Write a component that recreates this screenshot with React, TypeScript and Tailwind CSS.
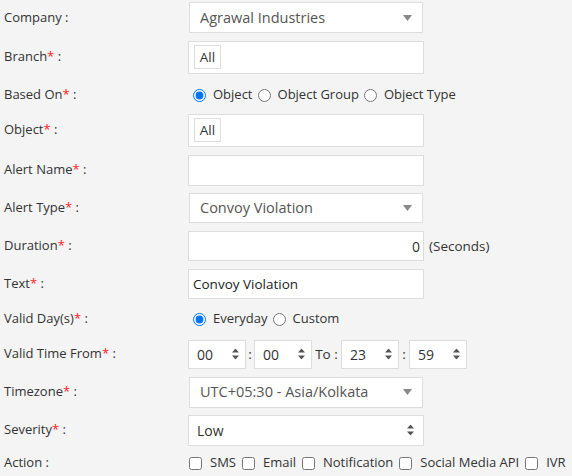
import type { ReactNode } from "react";

function Label({ text, required }: { text: string; required?: boolean }) {
  return (
    <div className="w-[184px] shrink-0 whitespace-nowrap pl-[4px] text-[13px] text-[#333]">
      {text}
      {required ? <span className="text-[#ff2222]">*</span> : null} :
    </div>
  );
}

function Row({ h, label, required, children }: { h: string; label: string; required?: boolean; children: ReactNode }) {
  return (
    <div className={`flex items-center ${h}`}>
      <Label text={label} required={required} />
      {children}
    </div>
  );
}

function Caret() {
  return (
    <svg width="9" height="6" viewBox="0 0 9 6" className="absolute right-[10px] top-1/2 -translate-y-1/2">
      <path d="M0 0h9L4.5 6z" fill="#888" />
    </svg>
  );
}

function UpDown({ className }: { className: string }) {
  return (
    <svg width="7" height="11" viewBox="0 0 7 11" className={className}>
      <path d="M3.5 0L7 4H0z" fill="#555" />
      <path d="M0 7h7L3.5 11z" fill="#555" />
    </svg>
  );
}

function SelectBox({ value, h }: { value: string; h: string }) {
  return (
    <div className={`relative ml-[5px] flex w-[234px] items-center whitespace-nowrap border border-[#ddd] bg-white pl-[10px] text-[14.5px] text-[#555] ${h}`}>
      {value}
      <Caret />
    </div>
  );
}

function TagBox({ h }: { h: string }) {
  return (
    <div className={`ml-[4px] flex w-[236px] items-center border border-[#ddd] bg-white pl-[5px] ${h}`}>
      <span className="flex h-[24px] w-[27px] items-center justify-center border border-[#ddd] text-[13.5px] text-[#333]">All</span>
    </div>
  );
}

function TimeBox({ value }: { value: string }) {
  return (
    <div className="relative flex h-[29px] w-[58px] items-center border border-[#ddd] bg-white pl-[8px] text-[14px] text-[#333]">
      {value}
      <UpDown className="absolute right-[6px] top-1/2 -translate-y-1/2" />
    </div>
  );
}

function Radio({ checked }: { checked?: boolean }) {
  return <input type="radio" readOnly checked={!!checked} className="h-[13px] w-[13px] shrink-0" />;
}

function Check() {
  return <input type="checkbox" readOnly className="h-[13px] w-[13px] shrink-0" />;
}

export default function App() {
  return (
    <div className="h-[476px] w-[572px] overflow-hidden bg-[#f4f4f4] font-['Open_Sans',sans-serif] text-[13px]">
      <Row h="h-[35px]" label="Company">
        <SelectBox value="Agrawal Industries" h="h-[31px]" />
      </Row>
      <Row h="h-[44px]" label="Branch" required>
        <TagBox h="h-[33px]" />
      </Row>
      <Row h="h-[32px]" label="Based On" required>
        <div className="ml-[9px] flex items-center whitespace-nowrap text-[13px] text-[#333]">
          <Radio checked />
          <span className="ml-[7px] mr-[5px]">Object</span>
          <Radio />
          <span className="ml-[7px] mr-[5px]">Object Group</span>
          <Radio />
          <span className="ml-[7px]">Object Type</span>
        </div>
      </Row>
      <Row h="h-[38px]" label="Object" required>
        <TagBox h="h-[33px]" />
      </Row>
      <Row h="h-[42px]" label="Alert Name" required>
        <div className="ml-[4px] h-[31px] w-[236px] border border-[#ddd] bg-white" />
      </Row>
      <Row h="h-[34px]" label="Alert Type" required>
        <SelectBox value="Convoy Violation" h="h-[30px]" />
      </Row>
      <Row h="h-[42px]" label="Duration" required>
        <div className="ml-[4px] flex h-[30px] w-[236px] items-center justify-end border border-[#ddd] bg-white pr-[3px] text-[14px] text-[#333]">0</div>
        <span className="ml-[5px] text-[13.5px] text-[#333]">(Seconds)</span>
      </Row>
      <Row h="h-[34px]" label="Text" required>
        <div className="ml-[4px] flex h-[30px] w-[236px] items-center border border-[#ddd] bg-white pl-[4px] text-[13.5px] text-[#222]">Convoy Violation</div>
      </Row>
      <Row h="h-[36px]" label="Valid Day(s)" required>
        <div className="ml-[9px] flex items-center whitespace-nowrap text-[13px] text-[#333]">
          <Radio checked />
          <span className="ml-[7px] mr-[5px]">Everyday</span>
          <Radio />
          <span className="ml-[7px]">Custom</span>
        </div>
      </Row>
      <Row h="h-[34px]" label="Valid Time From" required>
        <div className="ml-[4px] flex items-center whitespace-nowrap text-[13.5px] text-[#333]">
          <TimeBox value="00" />
          <span className="w-[8px] text-center">:</span>
          <TimeBox value="00" />
          <span className="w-[29px] text-center">To :</span>
          <TimeBox value="23" />
          <span className="w-[10px] text-center">:</span>
          <TimeBox value="59" />
        </div>
      </Row>
      <Row h="h-[42px]" label="Timezone" required>
        <SelectBox value="UTC+05:30 - Asia/Kolkata" h="h-[31px]" />
      </Row>
      <Row h="h-[34px]" label="Severity" required>
        <div className="relative ml-[4px] flex h-[31px] w-[236px] items-center border border-[#ddd] bg-white pl-[8px] text-[14px] text-[#333]">
          Low
          <UpDown className="absolute right-[9px] top-1/2 -translate-y-1/2" />
        </div>
      </Row>
      <Row h="h-[32px]" label="Action">
        <div className="ml-[5px] flex items-center whitespace-nowrap text-[13px] text-[#333]">
          <Check />
          <span className="ml-[8px] mr-[6px]">SMS</span>
          <Check />
          <span className="ml-[8px] mr-[6px]">Email</span>
          <Check />
          <span className="ml-[8px] mr-[6px]">Notification</span>
          <Check />
          <span className="ml-[8px] mr-[6px]">Social Media API</span>
          <Check />
          <span className="ml-[8px]">IVR</span>
        </div>
      </Row>
    </div>
  );
}
